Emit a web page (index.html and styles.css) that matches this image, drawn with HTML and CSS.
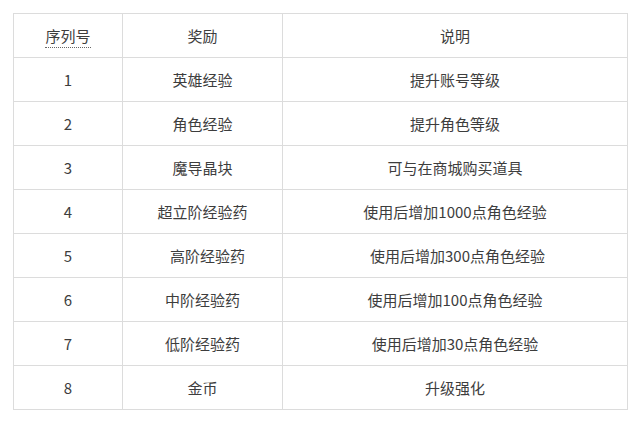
FILE: index.html
```html
<!DOCTYPE html>
<html lang="zh">
<head>
<meta charset="utf-8">
<link rel="stylesheet" href="styles.css">
</head>
<body>
<table class="reward-table">
  <colgroup>
    <col class="c-no">
    <col class="c-reward">
    <col class="c-desc">
  </colgroup>
  <thead>
    <tr><th><span class="dotted">序列号</span></th><th>奖励</th><th>说明</th></tr>
  </thead>
  <tbody>
    <tr><td>1</td><td>英雄经验</td><td>提升账号等级</td></tr>
    <tr><td>2</td><td>角色经验</td><td>提升角色等级</td></tr>
    <tr><td>3</td><td>魔导晶块</td><td>可与在商城购买道具</td></tr>
    <tr><td>4</td><td>超立阶经验药</td><td>使用后增加1000点角色经验</td></tr>
    <tr><td>5</td><td><span class="shift-l">高阶经验药</span></td><td><span class="shift-s">使用后增加300点角色经验</span></td></tr>
    <tr><td>6</td><td>中阶经验药</td><td>使用后增加100点角色经验</td></tr>
    <tr><td>7</td><td>低阶经验药</td><td>使用后增加30点角色经验</td></tr>
    <tr><td>8</td><td>金币</td><td>升级强化</td></tr>
  </tbody>
</table>
</body>
</html>
```

FILE: styles.css
```css
html, body {
  margin: 0;
  padding: 0;
  background: #fff;
}
body {
  padding: 13px 0 0 13px;
  font-family: "Noto Sans CJK SC", "Microsoft YaHei", sans-serif;
  color: #3d3d3d;
}
.reward-table {
  border-collapse: collapse;
  width: 614px;
  table-layout: fixed;
  font-size: 15px;
}
.c-no { width: 109px; }
.c-reward { width: 160px; }
.c-desc { width: 345px; }
.reward-table th,
.reward-table td {
  border: 1px solid #dcdcdc;
  height: 43px;
  padding: 0;
  text-align: center;
  vertical-align: middle;
  font-weight: normal;
  line-height: 20px;
}
.dotted {
  border-bottom: 1px dotted #666;
  padding-bottom: 1px;
}
.shift-l { padding-left: 10px; }
.shift-s { padding-left: 5px; }
```
